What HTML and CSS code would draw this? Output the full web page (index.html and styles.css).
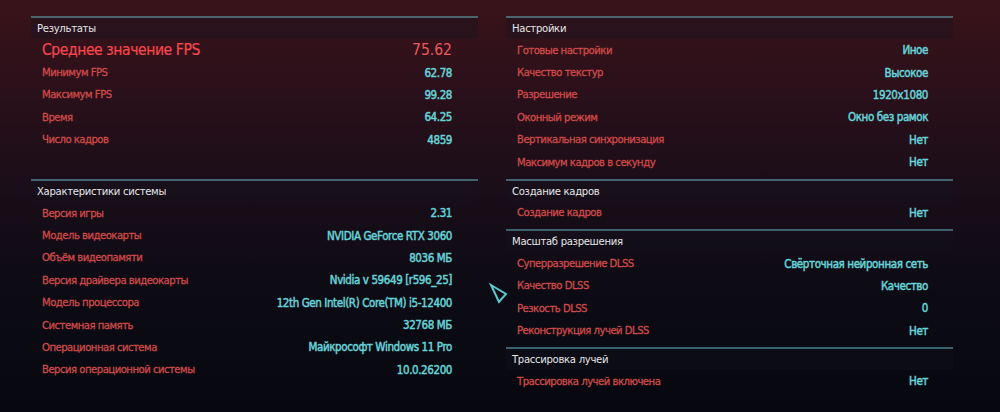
FILE: index.html
```html
<!DOCTYPE html>
<html lang="ru">
<head>
<meta charset="utf-8">
<title>Результаты теста</title>
<link rel="stylesheet" href="styles.css">
</head>
<body>
<div class="screen">
  <div class="column">
    <section class="group">
      <div class="group-head">Результаты</div>
      <div class="row big"><span class="label">Среднее значение FPS</span><span class="value">75.62</span></div>
      <div class="row"><span class="label">Минимум FPS</span><span class="value">62.78</span></div>
      <div class="row"><span class="label">Максимум FPS</span><span class="value">99.28</span></div>
      <div class="row"><span class="label">Время</span><span class="value">64.25</span></div>
      <div class="row"><span class="label">Число кадров</span><span class="value">4859</span></div>
    </section>
    <section class="group system">
      <div class="group-head">Характеристики системы</div>
      <div class="row"><span class="label">Версия игры</span><span class="value">2.31</span></div>
      <div class="row"><span class="label">Модель видеокарты</span><span class="value">NVIDIA GeForce RTX 3060</span></div>
      <div class="row"><span class="label">Объём видеопамяти</span><span class="value">8036 МБ</span></div>
      <div class="row"><span class="label">Версия драйвера видеокарты</span><span class="value">Nvidia v 59649 [r596_25]</span></div>
      <div class="row"><span class="label">Модель процессора</span><span class="value">12th Gen Intel(R) Core(TM) i5-12400</span></div>
      <div class="row"><span class="label">Системная память</span><span class="value">32768 МБ</span></div>
      <div class="row"><span class="label">Операционная система</span><span class="value">Майкрософт Windows 11 Pro</span></div>
      <div class="row"><span class="label">Версия операционной системы</span><span class="value">10.0.26200</span></div>
    </section>
  </div>
  <div class="column right">
    <section class="group">
      <div class="group-head">Настройки</div>
      <div class="row"><span class="label">Готовые настройки</span><span class="value">Иное</span></div>
      <div class="row"><span class="label">Качество текстур</span><span class="value">Высокое</span></div>
      <div class="row"><span class="label">Разрешение</span><span class="value">1920x1080</span></div>
      <div class="row"><span class="label">Оконный режим</span><span class="value">Окно без рамок</span></div>
      <div class="row"><span class="label">Вертикальная синхронизация</span><span class="value">Нет</span></div>
      <div class="row"><span class="label">Максимум кадров в секунду</span><span class="value">Нет</span></div>
    </section>
    <section class="group">
      <div class="group-head">Создание кадров</div>
      <div class="row"><span class="label">Создание кадров</span><span class="value">Нет</span></div>
    </section>
    <section class="group">
      <div class="group-head">Масштаб разрешения</div>
      <div class="row"><span class="label">Суперразрешение DLSS</span><span class="value">Свёрточная нейронная сеть</span></div>
      <div class="row"><span class="label">Качество DLSS</span><span class="value">Качество</span></div>
      <div class="row"><span class="label">Резкость DLSS</span><span class="value">0</span></div>
      <div class="row"><span class="label">Реконструкция лучей DLSS</span><span class="value">Нет</span></div>
    </section>
    <section class="group">
      <div class="group-head">Трассировка лучей</div>
      <div class="row"><span class="label">Трассировка лучей включена</span><span class="value">Нет</span></div>
    </section>
  </div>
  <svg class="cursor" width="24" height="24" viewBox="0 0 24 24" aria-hidden="true">
    <polygon points="3,3 18,12 11,20" fill="none" stroke="#5cc9cf" stroke-width="2" stroke-linejoin="miter"/>
  </svg>
</div>
</body>
</html>
```
FILE: styles.css
```css
html, body {
  margin: 0;
  padding: 0;
}
body {
  width: 1000px;
  height: 412px;
  overflow: hidden;
  background: linear-gradient(180deg, #3a131a 0%, #2a101a 22%, #170d17 50%, #0c0b14 72%, #07080f 100%);
  font-family: "DejaVu Sans Condensed", "DejaVu Sans", sans-serif;
  font-stretch: condensed;
  font-size: 11.2px;
}
.screen {
  position: relative;
  display: flex;
  gap: 28px;
  padding: 16px 0 0 31px;
  height: 412px;
  box-sizing: border-box;
}
.column {
  width: 447px;
  display: flex;
  flex-direction: column;
  gap: 5.3px;
}
.column .system {
  margin-top: 22.7px;
}
.group {
  border-top: 2px solid rgba(95, 170, 178, 0.55);
}
.group-head {
  height: 21px;
  line-height: 21px;
  padding-left: 6px;
  color: #e6e6e8;
  background: rgba(20, 20, 32, 0.35);
  font-size: 11.2px;
  letter-spacing: -0.3px;
}
.row {
  height: 22.4px;
  display: flex;
  align-items: center;
  justify-content: space-between;
  padding: 0 26px 0 11px;
}
.right .row {
  padding-right: 25px;
}
.label {
  color: #d04a49;
  letter-spacing: -0.5px;
  -webkit-text-stroke: 0.3px currentColor;
}
.value {
  color: #66d4da;
  font-size: 11.5px;
  letter-spacing: -0.4px;
  -webkit-text-stroke: 0.45px currentColor;
}
.row.big .label {
  color: #f8464d;
  font-size: 15.5px;
  letter-spacing: -0.4px;
  -webkit-text-stroke: 0.2px currentColor;
}
.row.big .value {
  color: #ee5860;
  font-size: 15.5px;
  letter-spacing: 0;
  -webkit-text-stroke: 0;
}
.cursor {
  position: absolute;
  left: 488px;
  top: 282px;
}
```
